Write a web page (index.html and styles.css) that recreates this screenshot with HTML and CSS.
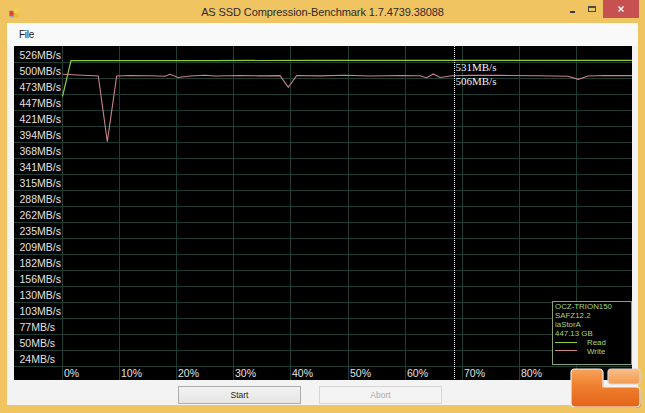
FILE: index.html
```html
<!DOCTYPE html>
<html>
<head>
<meta charset="utf-8">
<title>AS SSD Compression-Benchmark</title>
<link rel="stylesheet" href="styles.css">
</head>
<body>
<div class="window">
  <div class="titlebar">
    <svg class="app-icon" viewBox="0 0 10 10" width="10" height="10">
      <rect x="0.5" y="3" width="5" height="5" fill="#d9453a" stroke="#9a8c86" stroke-width="0.6"/>
      <rect x="4.5" y="0.5" width="5" height="4.5" fill="#f3d24a"/>
      <rect x="4.5" y="5.5" width="5" height="4" fill="#f0b640"/>
      <rect x="1.5" y="8" width="3" height="1.5" fill="#7aa6d6"/>
    </svg>
    <div class="title">AS SSD Compression-Benchmark 1.7.4739.38088</div>
    <div class="controls">
      <div class="ctl"><span class="glyph-min"></span></div>
      <div class="ctl"><span class="glyph-max"></span></div>
      <div class="ctl ctl-close">
        <svg class="glyph-close" viewBox="0 0 6 6" width="6" height="6">
          <path d="M0.5 0.5L5.5 5.5M5.5 0.5L0.5 5.5" stroke="#ffffff" stroke-width="1.4" fill="none"/>
        </svg>
      </div>
    </div>
  </div>

  <div class="client">
    <div class="menubar"><span class="menu-item">File</span></div>

    <div class="chart">
      <svg viewBox="0 0 618 334" width="618" height="334">
        <rect x="0" y="0" width="618" height="334" fill="#000000"/>
        <path class="grid" d="M0 16.5H618M0 32.5H618M0 48.5H618M0 64.5H618M0 80.5H618M0 96.5H618M0 112.5H618M0 128.5H618M0 144.5H618M0 160.5H618M0 176.5H618M0 192.5H618M0 208.5H618M0 224.5H618M0 240.5H618M0 256.5H618M0 272.5H618M0 288.5H618M0 304.5H618M0 320.5H618"/>
        <path class="grid" d="M48.5 0V334M105.5 0V334M162.5 0V334M219.5 0V334M276.5 0V334M334.5 0V334M391.5 0V334M448.5 0V334M505.5 0V334M562.5 0V334"/>

        <g class="ylab">
          <text x="5.5" y="13">526MB/s</text>
          <text x="5.5" y="29">500MB/s</text>
          <text x="5.5" y="45">473MB/s</text>
          <text x="5.5" y="61">447MB/s</text>
          <text x="5.5" y="77">421MB/s</text>
          <text x="5.5" y="93">394MB/s</text>
          <text x="5.5" y="109">368MB/s</text>
          <text x="5.5" y="125">341MB/s</text>
          <text x="5.5" y="141">315MB/s</text>
          <text x="5.5" y="157">288MB/s</text>
          <text x="5.5" y="173">262MB/s</text>
          <text x="5.5" y="189">235MB/s</text>
          <text x="5.5" y="205">209MB/s</text>
          <text x="5.5" y="221">182MB/s</text>
          <text x="5.5" y="237">156MB/s</text>
          <text x="5.5" y="253">130MB/s</text>
          <text x="5.5" y="269">103MB/s</text>
          <text x="5.5" y="285">77MB/s</text>
          <text x="5.5" y="301">50MB/s</text>
          <text x="5.5" y="317">24MB/s</text>
        </g>

        <g class="xlab">
          <text x="50" y="330.5">0%</text>
          <text x="107" y="330.5">10%</text>
          <text x="164" y="330.5">20%</text>
          <text x="221" y="330.5">30%</text>
          <text x="278" y="330.5">40%</text>
          <text x="336" y="330.5">50%</text>
          <text x="393" y="330.5">60%</text>
          <text x="450" y="330.5">70%</text>
          <text x="507" y="330.5">80%</text>
          <text x="564" y="330.5">90%</text>
        </g>

        <polyline class="write" points="48.5,28.3 84.3,30 93.3,95.7 102.7,30 116,29.5 136,29.8 151,30.2 156,28.3 164,31.5 176,30 191,29.3 201,30 226,29.5 246,29.9 266,29.6 274.3,41.3 282.7,29.5 306,29.9 331,29.2 356,30 386,29.5 406,29.8 412.7,31.7 419.3,28 426,31.5 438,29.8 456,29.2 486,29.4 526,29.8 554,30.3 564.3,33.3 574,30 591,29.5 618,29.6"/>
        <polyline class="read" points="48.5,50.5 57,14.6 200,14.6 300,14.3 618,14.3"/>

        <path class="cursor" d="M440.5 0V334"/>
        <text class="vlab" x="441.5" y="24.5">531MB/s</text>
        <text class="vlab" x="441.5" y="38.5">506MB/s</text>

        <rect class="legend-box" x="538.5" y="255.5" width="79" height="63"/>
        <g class="legend-text">
          <text x="541" y="262.5">OCZ-TRION150</text>
          <text x="541" y="271.5">SAFZ12.2</text>
          <text x="541" y="280.5">iaStorA</text>
          <text x="541" y="289.5">447.13 GB</text>
          <text x="573" y="298.5">Read</text>
          <text x="573" y="307.5">Write</text>
        </g>
        <path class="legend-read" d="M541 296.5H563"/>
        <path class="legend-write" d="M541 304.5H563"/>
      </svg>
    </div>

    <div class="actions">
      <button class="btn" type="button">Start</button>
      <button class="btn" type="button" disabled>Abort</button>
    </div>
  </div>

  <svg class="logo" viewBox="0 0 80 48" width="80" height="48">
    <defs>
      <linearGradient id="lg-main" x1="0" y1="0" x2="0" y2="1">
        <stop offset="0" stop-color="#f7a45a"/>
        <stop offset="0.45" stop-color="#ef7f2c"/>
        <stop offset="1" stop-color="#e2631a"/>
      </linearGradient>
      <linearGradient id="lg-small" x1="0" y1="0" x2="0" y2="1">
        <stop offset="0" stop-color="#f9be88"/>
        <stop offset="1" stop-color="#f29a4e"/>
      </linearGradient>
    </defs>
    <path d="M11 5H35Q39 5 39 9V23H72Q76 23 76 27V39Q76 43 72 43H11Q7 43 7 39V9Q7 5 11 5Z" fill="rgba(0,0,0,0.28)"/>
    <path d="M10 4H34Q38 4 38 8V22H71Q75 22 75 26V38Q75 42 71 42H10Q6 42 6 38V8Q6 4 10 4Z" fill="url(#lg-main)" stroke="#f4f1ee" stroke-width="1.2"/>
    <rect x="43" y="4" width="32" height="15" rx="3" fill="url(#lg-small)" stroke="#d8d4d0" stroke-width="1.2"/>
  </svg>
</div>
</body>
</html>
```

FILE: styles.css
```css
* {
  box-sizing: border-box;
}

html,
body {
  margin: 0;
  padding: 0;
}

body {
  width: 645px;
  height: 413px;
  overflow: hidden;
  background: #f1c462;
  font-family: "Liberation Sans", Arial, sans-serif;
}

.window {
  position: relative;
  width: 645px;
  height: 413px;
  display: flex;
  flex-direction: column;
  background: #f1c462;
}

/* ---------- title bar ---------- */
.titlebar {
  height: 23px;
  flex: none;
  display: grid;
  grid-template-columns: 1fr auto 1fr;
  align-items: start;
}

.app-icon {
  display: block;
  margin: 8px 0 0 9px;
}

.title {
  font-size: 11px;
  letter-spacing: -0.1px;
  line-height: 13px;
  padding-top: 6px;
  color: #2b2b2b;
  white-space: nowrap;
}

.controls {
  justify-self: end;
  display: flex;
  gap: 2px;
  padding-right: 6px;
}

.ctl {
  width: 18px;
  height: 18px;
  display: flex;
  justify-content: center;
  align-items: flex-start;
}

.glyph-min {
  display: block;
  width: 5px;
  height: 2px;
  margin-top: 11px;
  background: #3c3c3c;
}

.glyph-max {
  display: block;
  width: 8px;
  height: 6px;
  margin-top: 6px;
  border: 1px solid #4a4a4a;
  border-top-width: 2px;
}

.ctl-close {
  width: 36px;
  background: #c75050;
  align-items: center;
}

.glyph-close {
  display: block;
}

/* ---------- client area ---------- */
.client {
  flex: 1;
  margin: 0 7px 8px;
  background: #f3f3f3;
  display: flex;
  flex-direction: column;
}

.menubar {
  height: 23px;
  flex: none;
  display: flex;
  align-items: center;
  padding-left: 12px;
  background: #f9f9f9;
}

.menu-item {
  font-size: 10px;
  letter-spacing: -0.3px;
  color: #1a1a1a;
}

.chart {
  margin-left: 7px;
  width: 618px;
  height: 334px;
  flex: none;
  background: #000000;
}

.chart svg {
  display: block;
}

.grid {
  stroke: #1f3d37;
  stroke-width: 1;
  fill: none;
}

.ylab text,
.xlab text {
  fill: #e2e2e2;
  font-family: "Liberation Sans", Arial, sans-serif;
  font-size: 10.5px;
}

.read {
  fill: none;
  stroke: #8ccc48;
  stroke-width: 1.2;
}

.write {
  fill: none;
  stroke: #c9848c;
  stroke-width: 1.1;
}

.cursor {
  stroke: #ffffff;
  stroke-width: 1;
  stroke-dasharray: 1 1;
  fill: none;
}

.vlab {
  fill: #f0f0f0;
  font-family: "Liberation Serif", "Times New Roman", serif;
  font-size: 11px;
}

.legend-box {
  fill: #000000;
  stroke: #86a47c;
  stroke-width: 1;
}

.legend-text text {
  fill: #a4d67e;
  font-family: "Liberation Sans", Arial, sans-serif;
  font-size: 7.9px;
}

.legend-read {
  stroke: #8ccc48;
  stroke-width: 1;
}

.legend-write {
  stroke: #c9848c;
  stroke-width: 1;
}

/* ---------- buttons ---------- */
.actions {
  display: flex;
  gap: 18px;
  padding: 6px 0 0 171px;
}

.btn {
  width: 123px;
  height: 18px;
  padding: 0;
  margin: 0;
  font-family: "Liberation Sans", Arial, sans-serif;
  font-size: 8.5px;
  color: #1e1e1e;
  border: 1px solid #acacac;
  border-radius: 0;
  background: linear-gradient(#f2f2f2, #e5e5e5);
}

.btn:disabled {
  color: #a9a9a9;
  border-color: #d6d6d6;
  background: #f4f4f4;
}

/* ---------- watermark logo ---------- */
.logo {
  position: absolute;
  left: 565px;
  top: 365px;
  display: block;
}
```
